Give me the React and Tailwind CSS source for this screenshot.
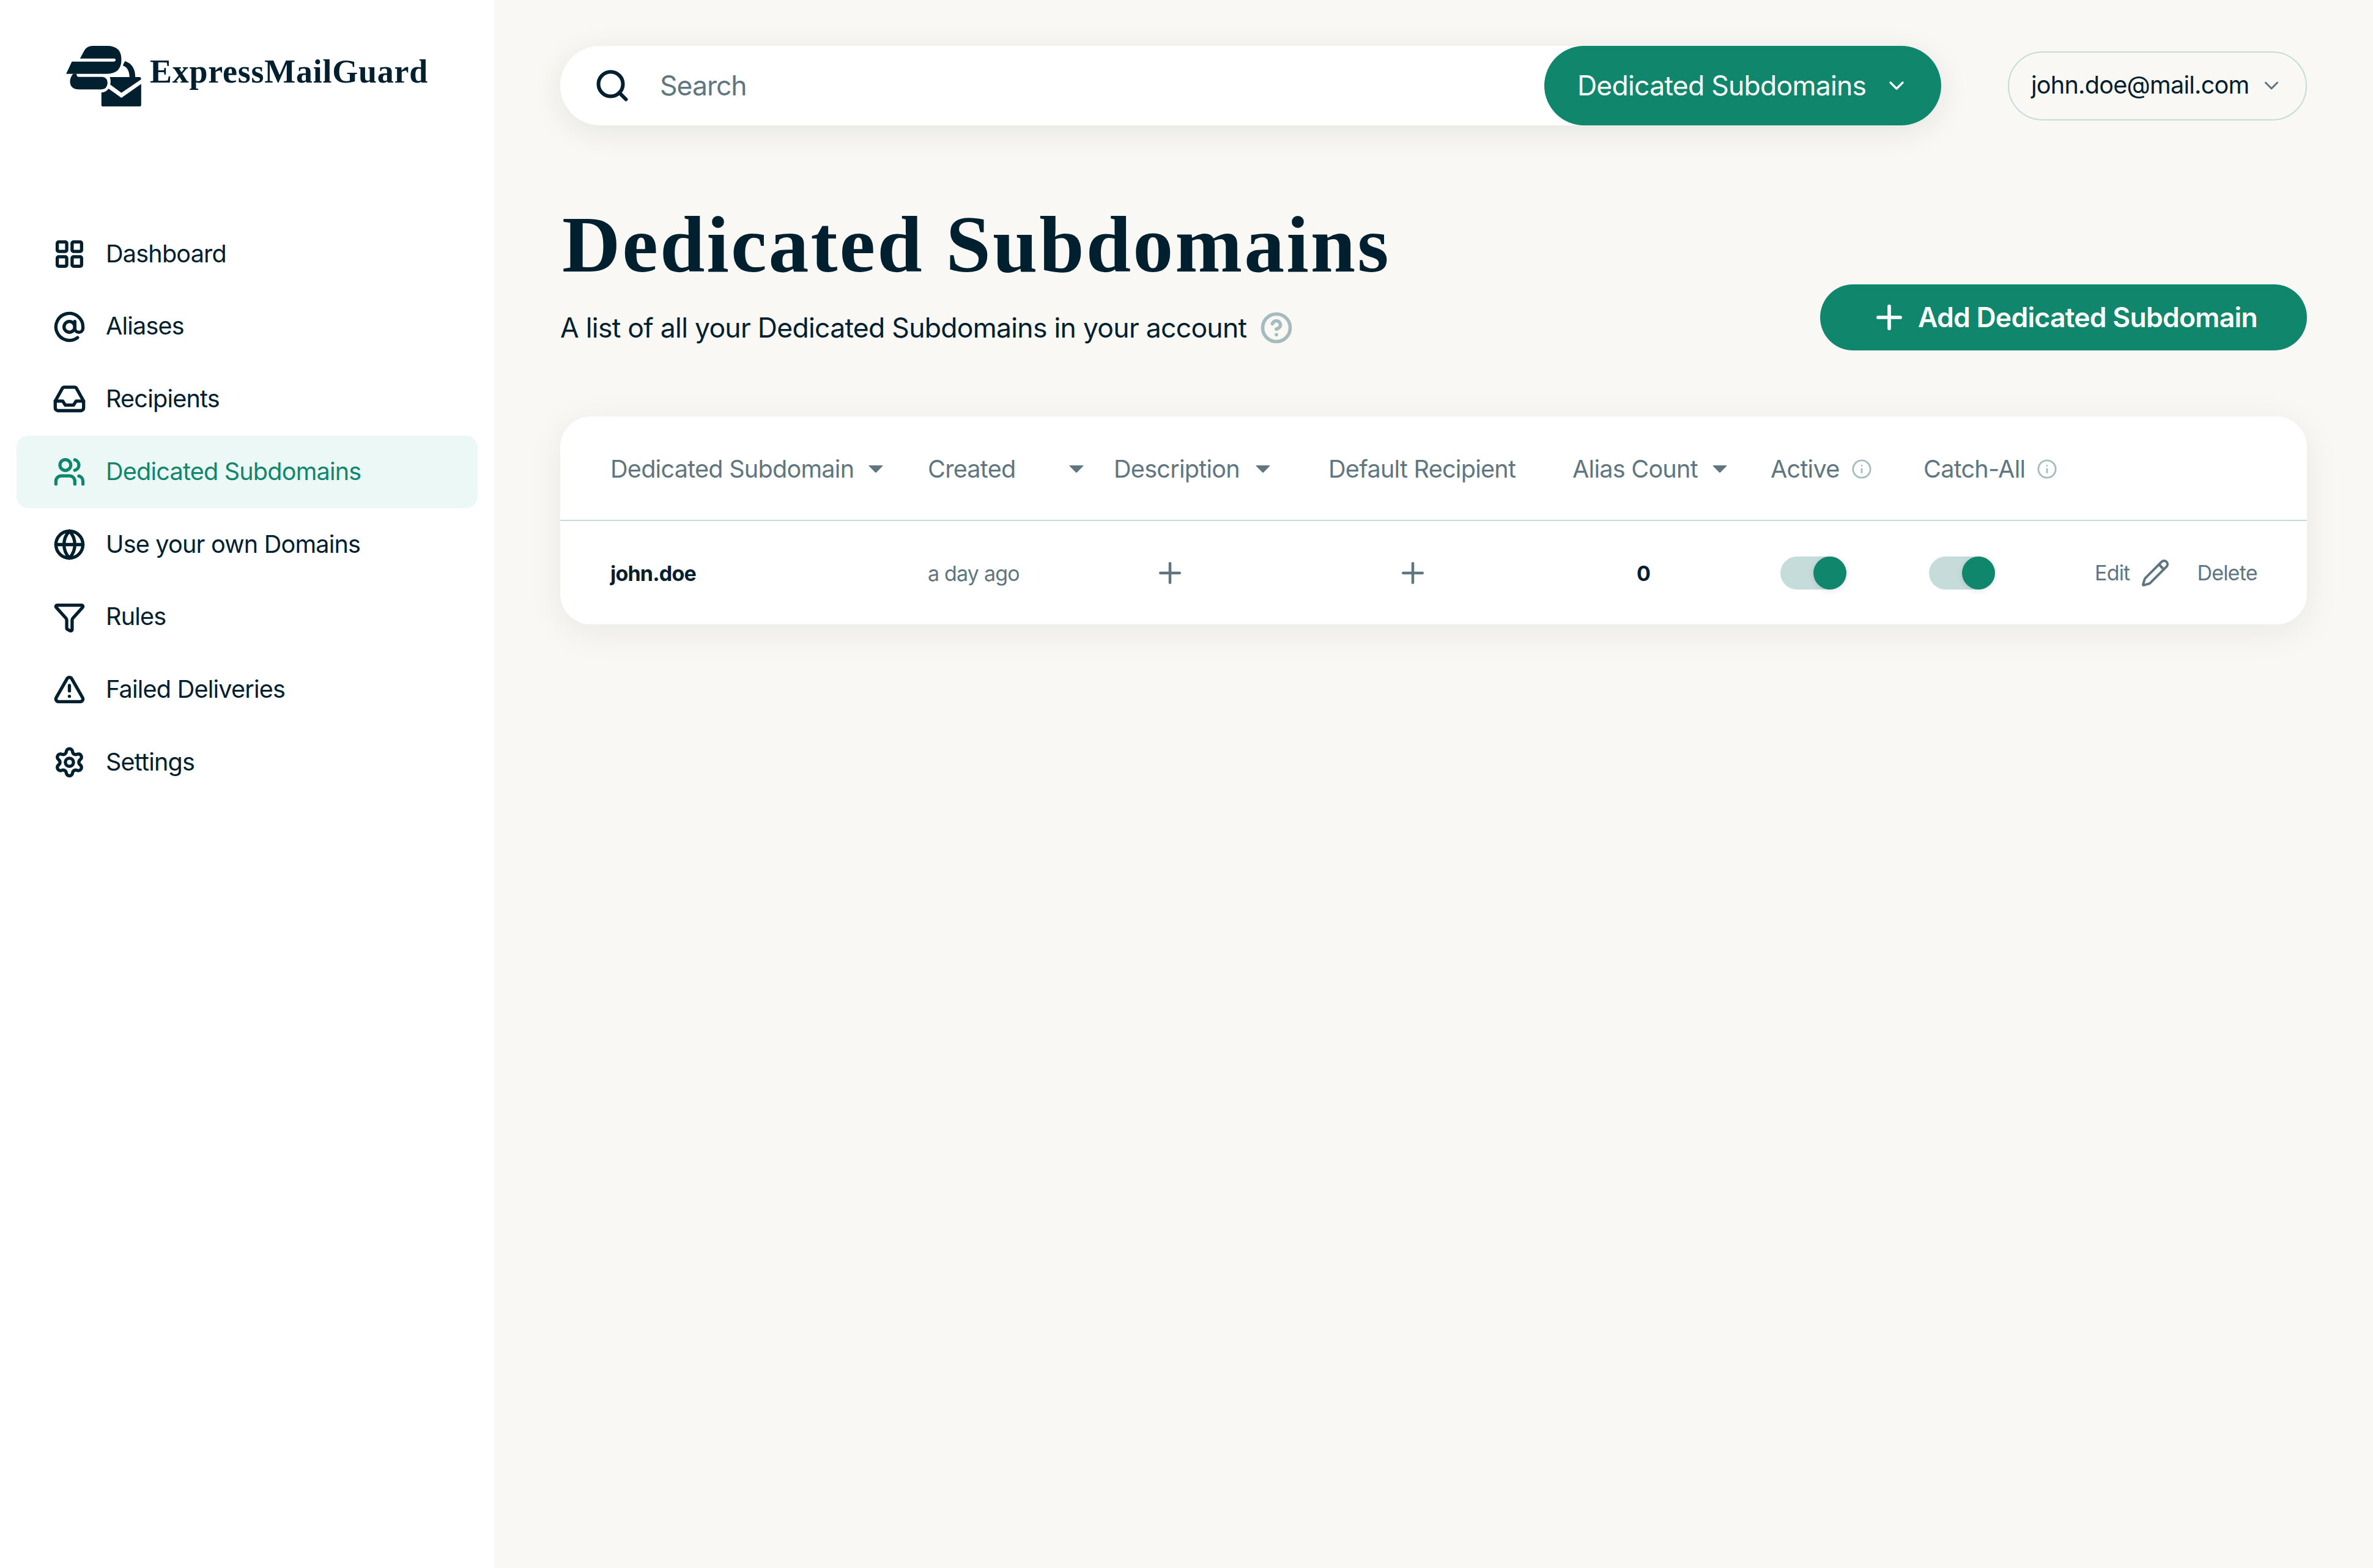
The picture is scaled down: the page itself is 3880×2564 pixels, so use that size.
import {
  LayoutGrid,
  AtSign,
  Users,
  Globe,
  Filter,
  TriangleAlert,
  Settings,
  Search,
  ChevronDown,
  Plus,
  CircleHelp,
  Info,
  Pencil,
} from "lucide-react";

// taller tray than lucide's Inbox
const InboxTray = ({ size, strokeWidth }) => (
  <svg
    viewBox="0 0 24 24"
    width={size}
    height={size}
    fill="none"
    stroke="currentColor"
    strokeWidth={strokeWidth}
    strokeLinecap="round"
    strokeLinejoin="round"
    className="shrink-0"
  >
    <path d="M1.5 13.5 H7 L9 16.5 H15 L17 13.5 H22.5" />
    <path d="M8.4 3.2 H15.6 A2 2 0 0 1 17.5 4.6 L22.5 13.5 V18.6 A2 2 0 0 1 20.5 20.6 H3.5 A2 2 0 0 1 1.5 18.6 V13.5 L6.5 4.6 A2 2 0 0 1 8.4 3.2 Z" />
  </svg>
);

const navItems = [
  { label: "Dashboard", icon: LayoutGrid },
  { label: "Aliases", icon: AtSign },
  { label: "Recipients", icon: InboxTray },
  { label: "Dedicated Subdomains", icon: Users, active: true },
  { label: "Use your own Domains", icon: Globe },
  { label: "Rules", icon: Filter },
  { label: "Failed Deliveries", icon: TriangleAlert },
  { label: "Settings", icon: Settings },
];

const COLS =
  "grid grid-cols-[519px_304px_351px_399px_324px_250px_240px_1fr] items-center pl-[82px]";

const Logo = () => (
  <svg viewBox="84 75 368 297" width="123" height="99" className="shrink-0 text-[#01202f]">
    <g fill="currentColor">
      <path d="M152 137 L172 100 Q185 75 215 75 L285 75 Q355 75 355 142 Q355 212 285 212 L84 212 L112 152 L318 152 Q327 150 327 144 Q327 137 318 137 Z" />
      <path d="M118 212 L135 212 Q135 227 147 227 L262 227 Q287 230 287 258 Q285 288 255 289 L150 289 Q103 289 103 250 Q103 230 118 212 Z" />
      <path d="M372 150 Q422 165 423 228 L395 228 Q392 180 362 172 Z" />
      <path d="M298 228 L443 228 Q453 228 451 240 L355 305 L300 265 Q305 245 298 228 Z" />
      <path d="M257 304 Q280 302 292 285 L355 330 L452 262 L452 365 Q452 372 445 372 L265 372 Q257 372 257 365 Z" />
    </g>
  </svg>
);

const Caret = () => (
  <svg viewBox="0 0 24 12" width="24" height="12" className="shrink-0 text-[#5f7680]">
    <path d="M1 0 H23 Q24 0 23.2 1 L13 11.4 Q12 12 11 11.4 L0.8 1 Q0 0 1 0 Z" fill="currentColor" />
  </svg>
);

const Toggle = ({ className }) => (
  <div className={`flex justify-end w-[108px] h-[54px] rounded-full bg-[#c5dcda] ${className}`}>
    <div className="w-[54px] h-[54px] rounded-full bg-[#10876c] shadow-[0_2px_10px_rgba(1,32,47,0.12)]" />
  </div>
);

const Sidebar = () => (
  <aside className="w-[808px] shrink-0 bg-white">
    <div className="h-[356px] pt-[75px] pl-[108px] flex items-start gap-[14px]">
      <Logo />
      <span className="font-['Liberation_Serif',serif] font-bold text-[54px] leading-[54px] mt-[15px] text-[#01202f] tracking-[0.75px]">
        ExpressMailGuard
      </span>
    </div>
    <nav className="mx-[27px]">
      {navItems.map(({ label, icon: Icon, active }) => (
        <a
          key={label}
          className={`flex items-center h-[118.75px] pl-[60px] gap-[33px] rounded-[20px] text-[39.6px] tracking-[-0.8px] ${
            active ? "bg-[#ecf8f6] text-[#10876c]" : "text-[#01202f]"
          }`}
        >
          <Icon size={53} strokeWidth={2.4} />
          {label}
        </a>
      ))}
    </nav>
  </aside>
);

const TopBar = () => (
  <div className="flex items-center justify-between">
    <div className="flex items-center w-[2258px] h-[130px] rounded-full bg-white shadow-[0_10px_50px_rgba(1,32,47,0.09)]">
      <Search size={60} strokeWidth={2.4} className="ml-[55px] text-[#01202f]" />
      <span className="ml-[48px] flex-1 text-[44.5px] tracking-[-1px] text-[#5f7680]">Search</span>
      <button className="flex items-center h-[130px] w-[649px] pl-[54px] rounded-full bg-[#10876c] text-white text-[44.5px] tracking-[-0.75px]">
        Dedicated Subdomains
        <ChevronDown size={40} strokeWidth={2} className="ml-[30px]" />
      </button>
    </div>
    <button className="flex items-center w-[489px] h-[113px] pl-[36px] rounded-full border-[2.5px] border-[#c5dcda] text-[39.6px] tracking-[-0.75px] text-[#01202f]">
      john.doe@mail.com
      <ChevronDown size={38} strokeWidth={2} className="ml-[17px] text-[#5f7680]" />
    </button>
  </div>
);

const Title = () => (
  <div className="flex justify-between h-[476px]">
    <div className="pt-[133px]">
      <h1 className="font-['Liberation_Serif',serif] font-bold text-[132px] leading-[124px] text-[#01202f] tracking-[3px] ml-[3px]">
        Dedicated Subdomains
      </h1>
      <div className="flex items-center gap-[22px] mt-[44px] text-[44.5px] leading-[60px] tracking-[-0.72px] text-[#01202f]">
        A list of all your Dedicated Subdomains in your account
        <CircleHelp size={54} strokeWidth={2.5} className="text-[#a6bbbd]" />
      </div>
    </div>
    <button className="flex items-center mt-[260px] w-[796px] h-[108px] pl-[85px] gap-[16px] rounded-full bg-[#10876c] text-white text-[44.5px] font-semibold tracking-[-0.75px]">
      <Plus size={62} strokeWidth={2.2} className="ml-[-3px]" />
      Add Dedicated Subdomain
    </button>
  </div>
);

const Table = () => (
  <div className="bg-white rounded-[50px] shadow-[0_12px_60px_rgba(1,32,47,0.07)]">
    <div className={`${COLS} h-[171px] pt-[4px] border-b-[2.5px] border-[#c5dcda] text-[39.6px] tracking-[-0.75px] text-[#5f7680]`}>
      <div className="flex items-center gap-[24px]">
        Dedicated Subdomain
        <Caret />
      </div>
      <div className="flex items-center justify-between w-[255px]">
        Created
        <Caret />
      </div>
      <div className="flex items-center gap-[26px]">
        Description
        <Caret />
      </div>
      <div>Default Recipient</div>
      <div className="flex items-center gap-[24px]">
        Alias Count
        <Caret />
      </div>
      <div className="flex items-center gap-[19px]">
        Active
        <Info size={34} strokeWidth={2} className="text-[#a6bbbd]" />
      </div>
      <div className="flex items-center gap-[19px] whitespace-nowrap">
        Catch-All
        <Info size={34} strokeWidth={2} className="text-[#a6bbbd]" />
      </div>
    </div>
    <div className={`${COLS} h-[169px] text-[34px] tracking-[-0.8px] text-[#5f7680]`}>
      <div className="font-bold text-[#01202f] pt-[1px]">john.doe</div>
      <div className="pt-[1px]">a day ago</div>
      <div>
        <Plus size={54} strokeWidth={2} className="ml-[65px]" />
      </div>
      <div>
        <Plus size={54} strokeWidth={2} className="ml-[111px]" />
      </div>
      <div className="font-bold text-[#01202f] pl-[105px] pt-[1px]">0</div>
      <div>
        <Toggle className="ml-[16px]" />
      </div>
      <div>
        <Toggle className="ml-[9px]" />
      </div>
      <div className="flex items-center ml-[40px] whitespace-nowrap">
        Edit
        <Pencil size={48} strokeWidth={2} className="ml-[18px]" />
        <span className="ml-[44px]">Delete</span>
      </div>
    </div>
  </div>
);

export default function App() {
  return (
    <div className="flex min-h-screen bg-[#f9f8f4] font-['Inter',sans-serif]">
      <Sidebar />
      <main className="flex-1 pt-[75px] px-[108px]">
        <TopBar />
        <Title />
        <Table />
      </main>
    </div>
  );
}
